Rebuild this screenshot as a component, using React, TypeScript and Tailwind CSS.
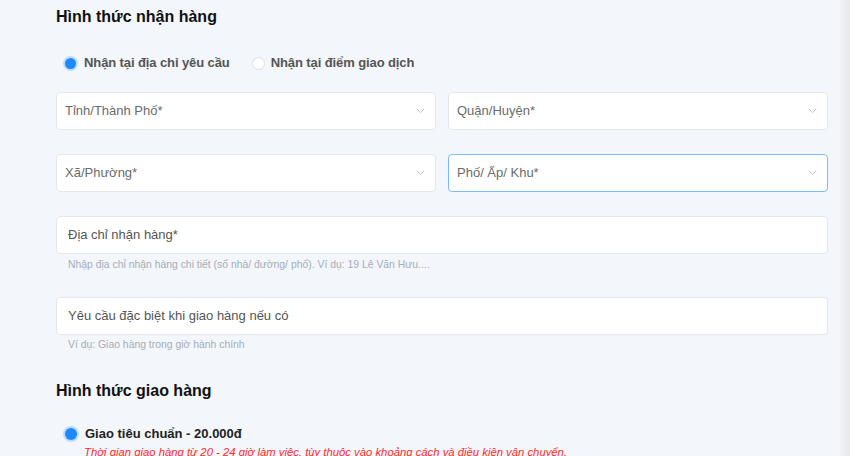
import React from "react";

function Chevron() {
  return (
    <svg width="9" height="6" viewBox="0 0 9 6" className="shrink-0">
      <path d="M0.8 0.8 L4.5 4.6 L8.2 0.8" fill="none" stroke="#c0c4cc" strokeWidth="1" />
    </svg>
  );
}

function SelectBox({ label, active }: { label: string; active?: boolean }) {
  return (
    <div
      className={
        "flex h-[38px] items-center justify-between rounded-[4px] border bg-white pl-[8px] pr-[10px] " +
        (active ? "border-[#7dbbff]" : "border-[#e4e7ed]")
      }
    >
      <span className="text-[13px] text-[#6b6b6b]">{label}</span>
      <Chevron />
    </div>
  );
}

function TextBox({ label }: { label: string }) {
  return (
    <div className="flex h-[38px] items-center rounded-[4px] border border-[#e4e7ed] bg-white pl-[11px]">
      <span className="text-[13px] text-[#555]">{label}</span>
    </div>
  );
}

function Radio({ checked, big }: { checked?: boolean; big?: boolean }) {
  if (checked) {
    return (
      <span
        className={
          "block shrink-0 rounded-full bg-[#1e88ff] shadow-[0_0_0_2px_#bcdcff] " +
          (big ? "h-[12px] w-[12px]" : "h-[11px] w-[11px]")
        }
      />
    );
  }
  return <span className="block h-[13px] w-[13px] shrink-0 rounded-full border border-[#dcdfe6] bg-white" />;
}

export default function App() {
  return (
    <div
      className="flex h-[456px] w-full overflow-hidden bg-[#f3f6fb]"
      style={{ fontFamily: '"Liberation Sans", Arial, sans-serif' }}
    >
      <div className="flex-1 pl-[56px] pt-[6px]">
        <div className="w-[772px]">
          <h2 className="text-[16px] font-bold leading-[22px] text-[#111]">Hình thức nhận hàng</h2>

          <div className="mt-[25px] flex h-[20px] items-center pl-[9px]">
            <Radio checked />
            <span className="ml-[8px] text-[13px] font-semibold tracking-[-0.1px] text-[#555]">Nhận tại địa chỉ yêu cầu</span>
            <span className="ml-[22px]">
              <Radio />
            </span>
            <span className="ml-[6px] text-[13px] font-semibold tracking-[-0.1px] text-[#555]">Nhận tại điểm giao dịch</span>
          </div>

          <div className="mt-[19px] grid grid-cols-2 gap-x-[12px] gap-y-[24px]">
            <SelectBox label="Tỉnh/Thành Phố*" />
            <SelectBox label="Quận/Huyện*" />
            <SelectBox label="Xã/Phường*" />
            <SelectBox label="Phố/ Ấp/ Khu*" active />
          </div>

          <div className="mt-[24px]">
            <TextBox label="Địa chỉ nhận hàng*" />
            <div className="mt-[4px] pl-[12px] text-[10.4px] leading-[14px] text-[#a6adb8]">
              Nhập địa chỉ nhận hàng chi tiết (số nhà/ đường/ phố). Ví dụ: 19 Lê Văn Hưu....
            </div>
          </div>

          <div className="mt-[25px]">
            <TextBox label="Yêu cầu đặc biệt khi giao hàng nếu có" />
            <div className="mt-[3px] pl-[12px] text-[10.4px] leading-[14px] text-[#a6adb8]">
              Ví dụ: Giao hàng trong giờ hành chính
            </div>
          </div>

          <h2 className="mt-[28px] text-[16px] font-bold leading-[22px] text-[#111]">Hình thức giao hàng</h2>

          <div className="mt-[23px] flex h-[18px] items-center pl-[9px]">
            <Radio checked big />
            <span className="ml-[8px] text-[13px] font-bold text-[#222]">Giao tiêu chuẩn - 20.000đ</span>
          </div>
          <div className="mt-[1px] pl-[28px] text-[11.3px] italic leading-[16px] text-[#ff2b2b]">
            Thời gian giao hàng từ 20 - 24 giờ làm việc, tùy thuộc vào khoảng cách và điều kiện vận chuyển.
          </div>
        </div>
      </div>
      <div className="w-[10px] bg-gradient-to-r from-[#f0f2f6] to-[#e6e8ec]" />
    </div>
  );
}
